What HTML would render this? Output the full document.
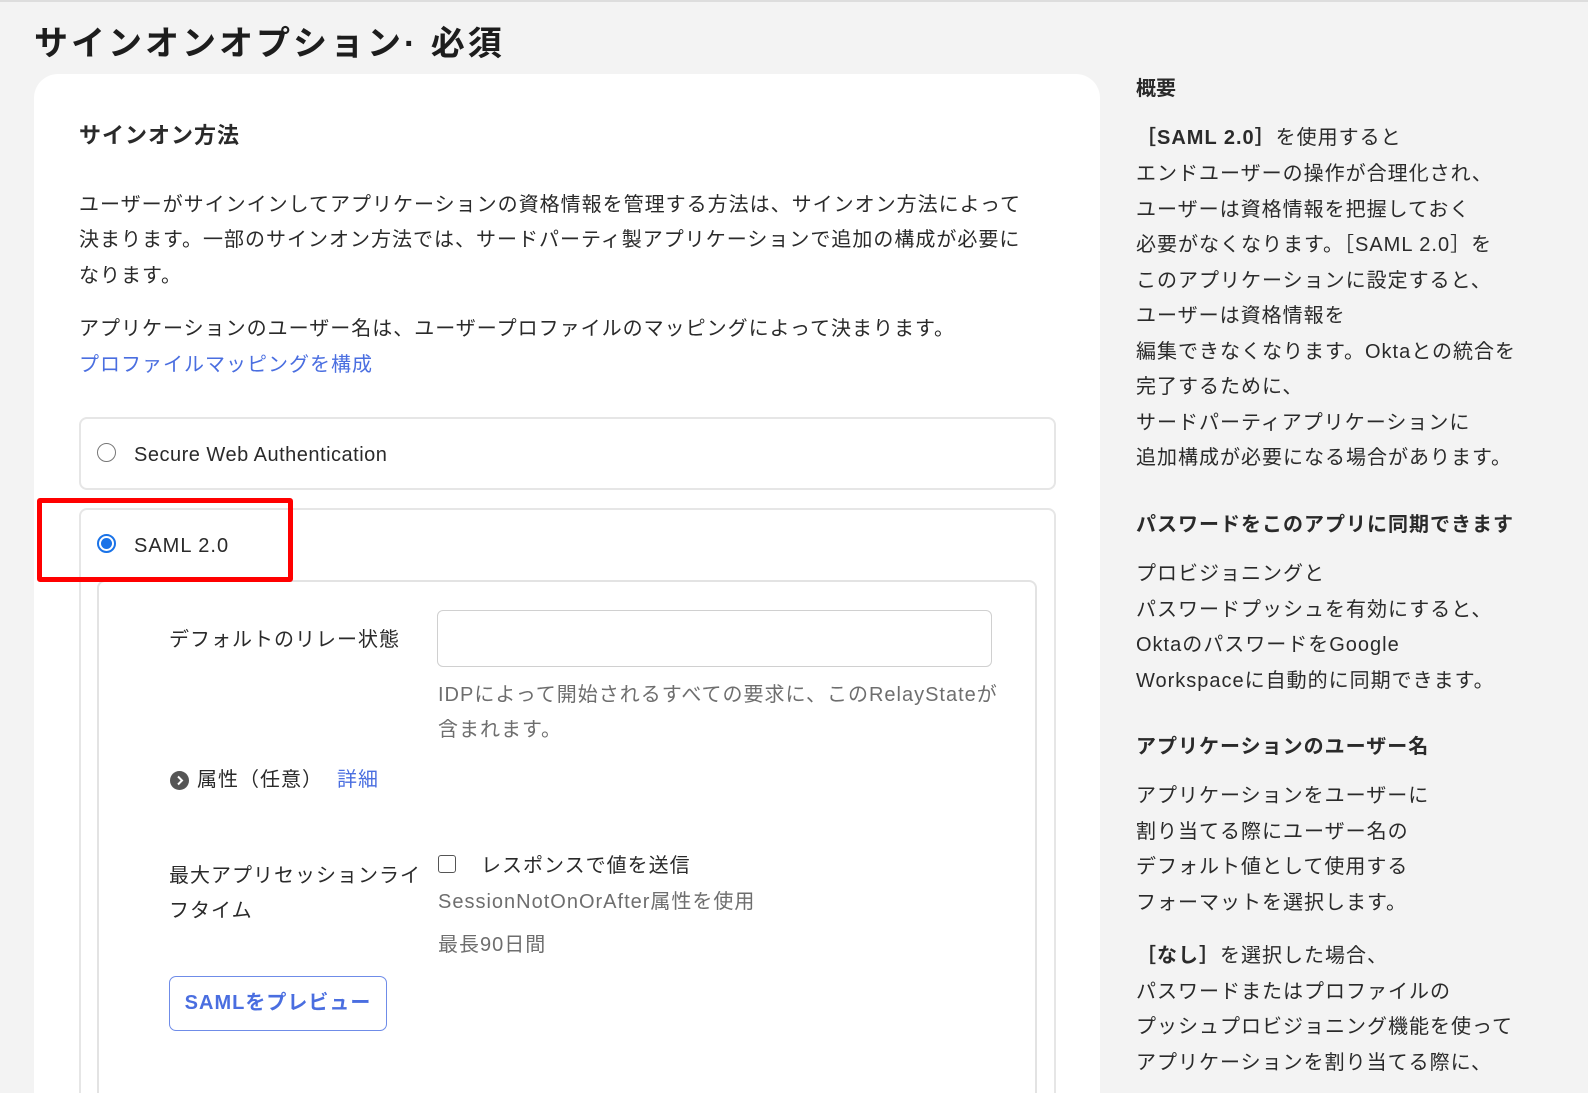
<!DOCTYPE html>
<html style="overflow:hidden;width:1588px;height:1093px"><head><meta charset="utf-8"><style>
*{margin:0;padding:0;box-sizing:border-box}
body{width:1588px;height:1093px;background:#f3f3f3;font-family:"Liberation Sans","Noto Sans CJK JP",sans-serif;color:#2a2a2a;position:relative;overflow:hidden;border-top:2px solid #ddd}
.a{position:absolute;white-space:nowrap}
.t{font-size:20px;line-height:36px;letter-spacing:1px}
.g{color:#6e6e6e}
.b{font-weight:bold}
.l{color:#4a6ee0}
</style></head><body>
<div class="a b" style="left:34px;top:18px;font-size:34px;line-height:48px;color:#1d1d1d;letter-spacing:3px">サインオンオプション· 必須</div>
<div class="a" style="left:34px;top:72px;width:1066px;height:1021px;background:#fff;border-radius:24px 24px 0 0"></div>
<div class="a b" style="left:79px;top:116px;font-size:22px;line-height:36px;letter-spacing:1px">サインオン方法</div>
<div class="a t" style="left:79px;top:185px">ユーザーがサインインしてアプリケーションの資格情報を管理する方法は、サインオン方法によって</div>
<div class="a t" style="left:79px;top:220px">決まります。一部のサインオン方法では、サードパーティ製アプリケーションで追加の構成が必要に</div>
<div class="a t" style="left:79px;top:256px">なります。</div>
<div class="a t" style="left:79px;top:309px">アプリケーションのユーザー名は、ユーザープロファイルのマッピングによって決まります。</div>
<div class="a t l" style="left:79px;top:345px">プロファイルマッピングを構成</div>
<div class="a" style="left:79px;top:415px;width:977px;height:73px;border:2px solid #e6e6e6;border-radius:8px"></div>
<div class="a" style="left:97px;top:441px;width:19px;height:19px;border:1.5px solid #777;border-radius:50%"></div>
<div class="a t" style="left:134px;top:435px;letter-spacing:0.5px">Secure Web Authentication</div>
<div class="a" style="left:79px;top:506px;width:977px;height:620px;border:2px solid #e6e6e6;border-radius:8px"></div>
<div class="a" style="left:97px;top:532px;width:19px;height:19px;border:2px solid #1a73e8;border-radius:50%;background:#fff"></div>
<div class="a" style="left:101px;top:536px;width:11px;height:11px;background:#1a73e8;border-radius:50%"></div>
<div class="a t" style="left:134px;top:526px">SAML 2.0</div>
<div class="a" style="left:97px;top:578px;width:940px;height:540px;border:2px solid #e3e3e3;border-radius:8px"></div>
<div class="a" style="left:37px;top:496px;width:256px;height:84px;border:5px solid #f00;border-radius:3px"></div>
<div class="a t" style="left:169px;top:620px">デフォルトのリレー状態</div>
<div class="a" style="left:437px;top:608px;width:555px;height:57px;border:1.5px solid #d0d0d0;border-radius:6px"></div>
<div class="a t g" style="left:438px;top:675px">IDPによって開始されるすべての要求に、このRelayStateが</div>
<div class="a t g" style="left:438px;top:710px">含まれます。</div>
<div class="a" style="left:170px;top:769px;width:19px;height:19px;border-radius:50%;background:#555"><svg width="19" height="19" viewBox="0 0 19 19"><path d="M8 5.5l4 4-4 4" stroke="#fff" stroke-width="2" fill="none"/></svg></div>
<div class="a t" style="left:197px;top:760px">属性（任意）</div>
<div class="a t l" style="left:337px;top:760px">詳細</div>
<div class="a t" style="left:169px;top:856px">最大アプリセッションライ</div>
<div class="a t" style="left:169px;top:891px">フタイム</div>
<div class="a" style="left:438px;top:853px;width:18px;height:18px;border:1.5px solid #555;border-radius:3px"></div>
<div class="a t" style="left:481px;top:846px">レスポンスで値を送信</div>
<div class="a t g" style="left:438px;top:882px">SessionNotOnOrAfter属性を使用</div>
<div class="a t g" style="left:438px;top:925px">最長90日間</div>
<div class="a b l" style="left:169px;top:974px;width:218px;height:55px;border:1.5px solid #6f8ce8;border-radius:7px;font-size:20px;line-height:52px;text-align:center;letter-spacing:1px">SAMLをプレビュー</div>
<div class="a b" style="left:1136px;top:69px;font-size:20px;line-height:36px">概要</div>
<div class="a t" style="left:1136px;top:118px"><b>［SAML 2.0］</b>を使用すると</div>
<div class="a t" style="left:1136px;top:154px">エンドユーザーの操作が合理化され、</div>
<div class="a t" style="left:1136px;top:190px">ユーザーは資格情報を把握しておく</div>
<div class="a t" style="left:1136px;top:225px">必要がなくなります。［SAML 2.0］を</div>
<div class="a t" style="left:1136px;top:261px">このアプリケーションに設定すると、</div>
<div class="a t" style="left:1136px;top:296px">ユーザーは資格情報を</div>
<div class="a t" style="left:1136px;top:332px">編集できなくなります。Oktaとの統合を</div>
<div class="a t" style="left:1136px;top:367px">完了するために、</div>
<div class="a t" style="left:1136px;top:403px">サードパーティアプリケーションに</div>
<div class="a t" style="left:1136px;top:438px">追加構成が必要になる場合があります。</div>
<div class="a t b" style="left:1136px;top:505px">パスワードをこのアプリに同期できます</div>
<div class="a t" style="left:1136px;top:554px">プロビジョニングと</div>
<div class="a t" style="left:1136px;top:590px">パスワードプッシュを有効にすると、</div>
<div class="a t" style="left:1136px;top:625px">OktaのパスワードをGoogle</div>
<div class="a t" style="left:1136px;top:661px">Workspaceに自動的に同期できます。</div>
<div class="a t b" style="left:1136px;top:727px">アプリケーションのユーザー名</div>
<div class="a t" style="left:1136px;top:776px">アプリケーションをユーザーに</div>
<div class="a t" style="left:1136px;top:812px">割り当てる際にユーザー名の</div>
<div class="a t" style="left:1136px;top:847px">デフォルト値として使用する</div>
<div class="a t" style="left:1136px;top:883px">フォーマットを選択します。</div>
<div class="a t" style="left:1136px;top:936px"><b>［なし］</b>を選択した場合、</div>
<div class="a t" style="left:1136px;top:972px">パスワードまたはプロファイルの</div>
<div class="a t" style="left:1136px;top:1007px">プッシュプロビジョニング機能を使って</div>
<div class="a t" style="left:1136px;top:1043px">アプリケーションを割り当てる際に、</div>
</body></html>
